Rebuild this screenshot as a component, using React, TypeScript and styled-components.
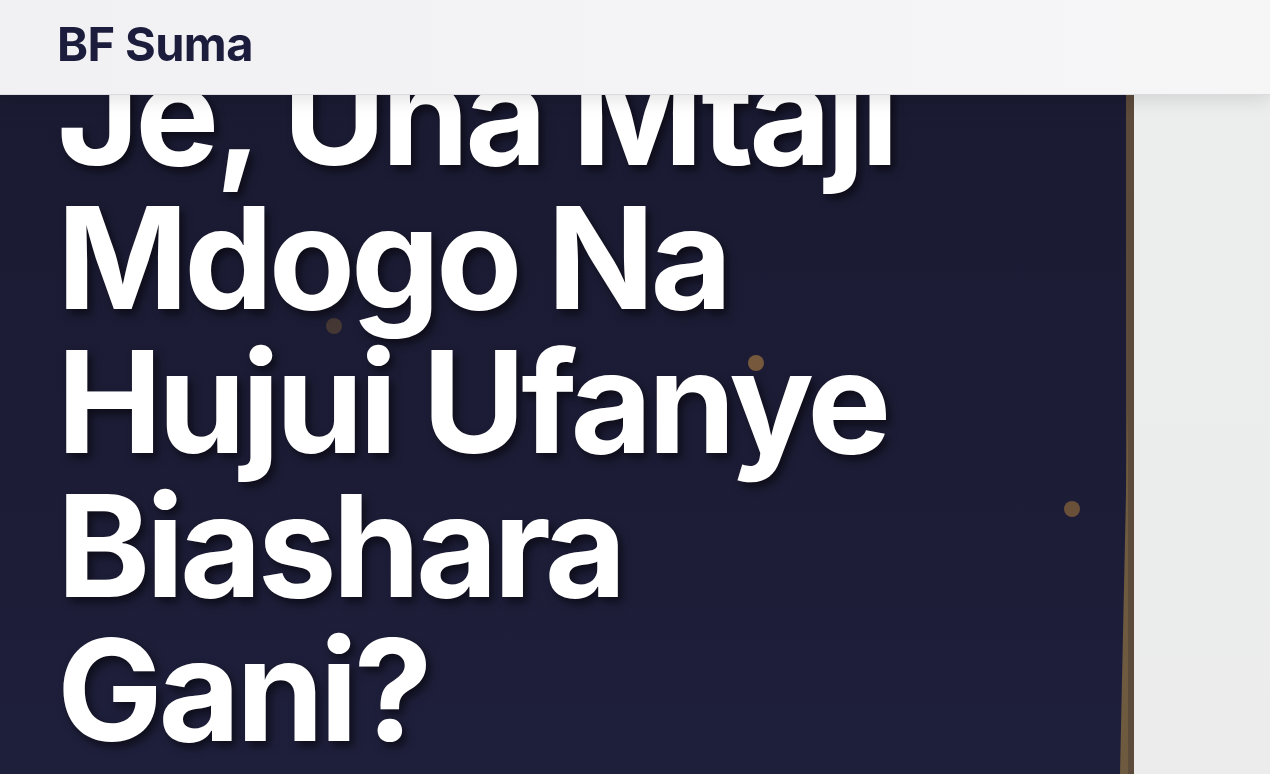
import * as React from "react";
import styled, { createGlobalStyle } from "styled-components";

const GlobalStyle = createGlobalStyle`
	html, body {
		margin: 0;
		padding: 0;
		overflow: hidden;
		background: #eceeee;
	}

	body {
		font-family: Inter, "Noto Sans", "Liberation Sans", sans-serif;
	}
`;

const Header = styled.header`
	position: fixed;
	top: 0;
	left: 0;
	right: 0;
	z-index: 10;
	height: 94px;
	display: flex;
	align-items: center;
	padding: 0 57px;
	background: linear-gradient(90deg, #f1f1f3 0%, #f4f4f6 60%, #f6f6f7 100%);
	border-bottom: 1px solid #dcdce0;
	box-shadow: 0 4px 18px rgba(0, 0, 0, 0.12);
`;

const Logo = styled.a`
	font-size: 47px;
	font-weight: 700;
	letter-spacing: -0.6px;
	color: #1c1c3c;
	text-decoration: none;
	margin-top: -8px;
`;

const Hero = styled.section`
	display: grid;
	grid-template-columns: 1126px 1fr;
	height: 774px;
`;

const Stage = styled.div`
	position: relative;
	overflow: hidden;
	padding: 42px 0 0 57px;
	background: linear-gradient(180deg, #1a1a32 0%, #1c1c36 60%, #1e1f3b 100%);
`;

const Title = styled.h1`
	position: relative;
	margin: 0;
	max-width: 880px;
	font-size: 141px;
	line-height: 144px;
	font-weight: 700;
	letter-spacing: -0.03em;
	color: #ffffff;
	text-shadow: 4px 5px 8px rgba(0, 0, 0, 0.55);
`;

const Dot = styled.span<{ $tone: string }>`
	position: absolute;
	width: 16px;
	height: 16px;
	border-radius: 50%;
	background: ${(p) => p.$tone};
`;

const Side = styled.aside`
	position: relative;
	border-left: 8px solid #5c4a3a;
	background: linear-gradient(180deg, #eceeee 0%, #ebeceb 100%);
`;

const Wedge = styled.svg`
	position: absolute;
	left: -14px;
	top: 400px;
	width: 8px;
	height: 374px;
`;

const dots = [
	{ x: 326, y: 318, tone: "#453834" },
	{ x: 748, y: 355, tone: "#76593c" },
	{ x: 1064, y: 501, tone: "#6a5039" },
];

export default function App() {
	return (
		<>
			<GlobalStyle />
			<Header>
				<Logo href="#">BF Suma</Logo>
			</Header>
			<Hero>
				<Stage>
					{dots.map((d) => (
						<Dot key={d.x} $tone={d.tone} style={{ left: d.x, top: d.y }} />
					))}
					<Title>Je, Una Mtaji Mdogo Na Hujui Ufanye Biashara Gani?</Title>
				</Stage>
				<Side>
					<Wedge viewBox="0 0 8 374" preserveAspectRatio="none">
						<polygon points="8,0 8,374 0,374" fill="#6e5a3e" />
					</Wedge>
				</Side>
			</Hero>
		</>
	);
}
